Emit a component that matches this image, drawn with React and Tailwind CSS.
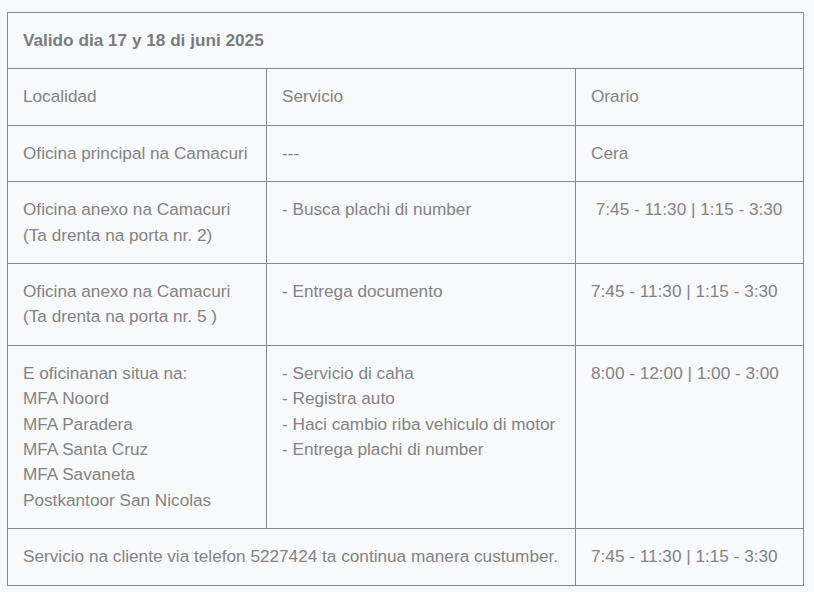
import React from 'react';

const rows = [
  {
    loc: ['Oficina principal na Camacuri'],
    serv: ['---'],
    time: 'Cera',
  },
  {
    loc: ['Oficina anexo na Camacuri', '(Ta drenta na porta nr. 2)'],
    serv: ['- Busca plachi di number'],
    time: '\u00a07:45 - 11:30 | 1:15 - 3:30',
  },
  {
    loc: ['Oficina anexo na Camacuri', '(Ta drenta na porta nr. 5 )'],
    serv: ['- Entrega documento'],
    time: '7:45 - 11:30 | 1:15 - 3:30',
  },
  {
    loc: [
      'E oficinanan situa na:',
      'MFA Noord',
      'MFA Paradera',
      'MFA Santa Cruz',
      'MFA Savaneta',
      'Postkantoor San Nicolas',
    ],
    serv: [
      '- Servicio di caha',
      '- Registra auto',
      '- Haci cambio riba vehiculo di motor',
      '- Entrega plachi di number',
    ],
    time: '8:00 - 12:00 | 1:00 - 3:00',
  },
];

const cell = 'border border-[#8a8a8a] px-[15px] py-[15px] align-top text-left font-normal';

export default function App() {
  return (
    <div
      className="min-h-[592px] bg-[#f8f9fa] pt-[12px] pl-[7px] text-[17.2px] leading-[25.4px] text-[#838383]"
      style={{ fontFamily: '"Liberation Sans", Arial, sans-serif' }}
    >
      <table className="w-[796px] table-fixed border-collapse">
        <colgroup>
          <col className="w-[259px]" />
          <col className="w-[309px]" />
          <col className="w-[228px]" />
        </colgroup>
        <thead>
          <tr>
            <th colSpan={3} className={cell + ' !font-bold text-[#7b7c80]'}>
              Valido dia 17 y 18 di juni 2025
            </th>
          </tr>
          <tr>
            <th className={cell}>Localidad</th>
            <th className={cell}>Servicio</th>
            <th className={cell}>Orario</th>
          </tr>
        </thead>
        <tbody>
          {rows.map((r, i) => (
            <tr key={i}>
              <td className={cell}>
                {r.loc.map((l, j) => (
                  <div key={j}>{l}</div>
                ))}
              </td>
              <td className={cell}>
                {r.serv.map((s, j) => (
                  <div key={j}>{s}</div>
                ))}
              </td>
              <td className={cell}>{r.time}</td>
            </tr>
          ))}
          <tr>
            <td colSpan={2} className={cell}>
              Servicio na cliente via telefon 5227424 ta continua manera custumber.
            </td>
            <td className={cell}>7:45 - 11:30 | 1:15 - 3:30</td>
          </tr>
        </tbody>
      </table>
    </div>
  );
}
